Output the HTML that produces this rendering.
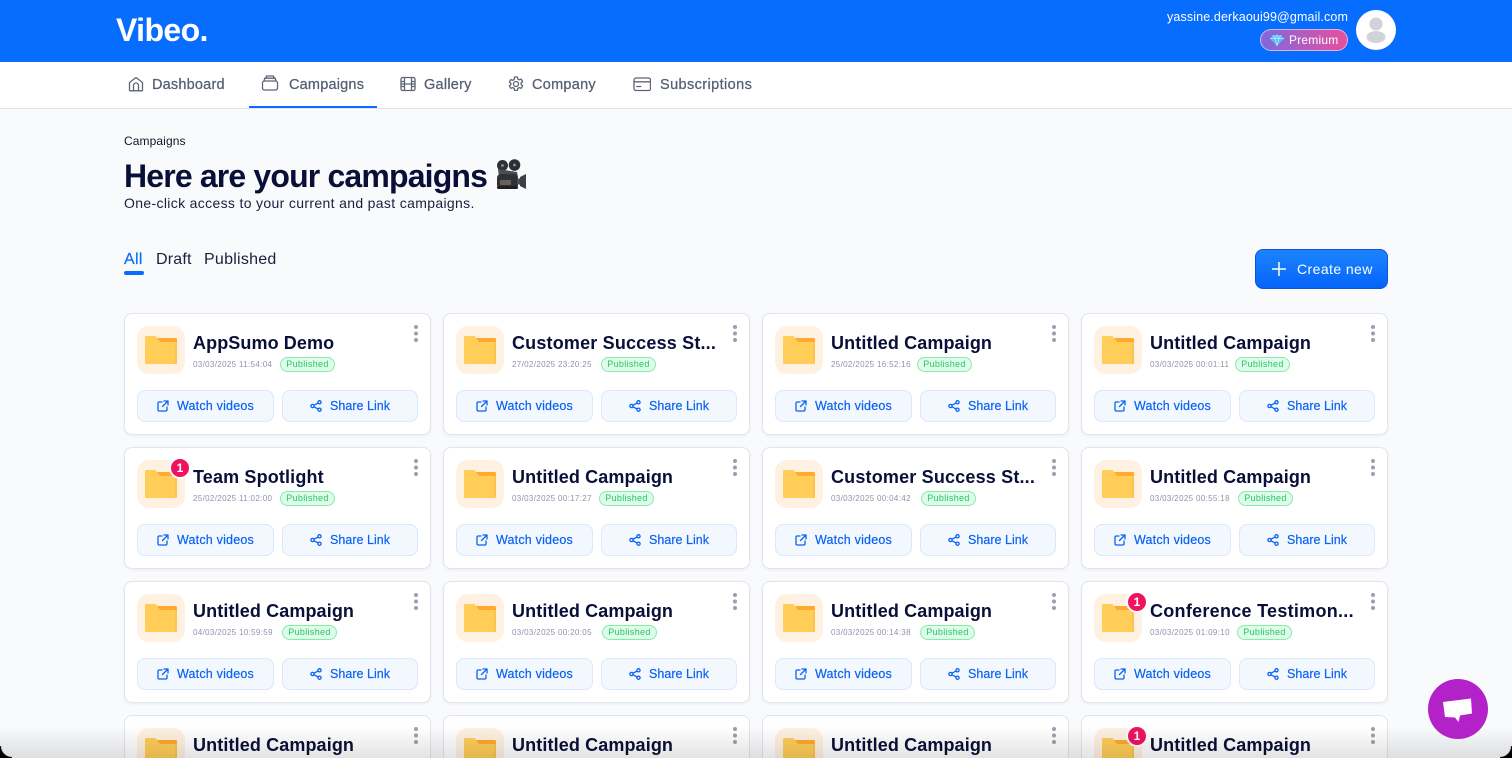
<!DOCTYPE html>
<html lang="en"><head><meta charset="utf-8"><title>Vibeo Campaigns</title>
<style>
*{box-sizing:border-box}
html,body{margin:0;padding:0;width:1512px;height:758px;overflow:hidden}
#w{position:absolute;left:0;top:0;width:1512px;height:758px;overflow:hidden;background:#f9fafc;font-family:"Liberation Sans",sans-serif;color:#0b1038}
.a{position:absolute;white-space:nowrap}
.hd{position:absolute;left:0;top:0;width:1512px;height:62px;background:#076dff}
.nv{position:absolute;left:0;top:62px;width:1512px;height:47px;background:#fff;border-bottom:1px solid #e4e6ee}
.nt{position:absolute;top:76px;font-size:14.5px;line-height:18px;color:#565e72;white-space:nowrap;-webkit-text-stroke:.25px #565e72}
.ni{position:absolute;top:75px;width:18px;height:18px;fill:none;stroke:#5d6477;stroke-width:1.3;stroke-linecap:round;stroke-linejoin:round}
.c{position:absolute;width:307px;height:122px;background:#fff;border:1px solid #e2e5ec;border-radius:8px;box-shadow:0 1px 3px rgba(20,30,60,.06)}
.c.l{height:43px;border-bottom:0;border-radius:8px 8px 0 0;box-shadow:none;overflow:hidden}
.l .f{height:31px;border-radius:12px 12px 0 0;overflow:hidden}
.f{position:absolute;left:12px;top:12px;width:48px;height:48px;background:#fff1e1;border-radius:12px}
.f svg{position:absolute;left:8px;top:9px;width:32px;height:30px}
.t{position:absolute;left:68px;top:19px;font-size:18px;line-height:20px;font-weight:700;color:#0a0f38;white-space:nowrap}
.u{letter-spacing:.12px}
.d{position:absolute;left:68px;top:46px;font-size:8px;line-height:10px;letter-spacing:.34px;color:#8d94a6;white-space:nowrap}
.p{position:absolute;top:43px;width:55px;height:15px;border:1px solid #86ecaa;background:#dffbe9;border-radius:8px;font-size:9px;line-height:13px;letter-spacing:.32px;color:#27c766;text-align:center;white-space:nowrap}
.b{position:absolute;top:76px;height:32px;background:#f3f8ff;border:1px solid #dbe7fb;border-radius:8px;font-size:12.5px;line-height:30px;color:#0a62f0;white-space:nowrap;-webkit-text-stroke:.2px #0a62f0}
.b1{left:12px;width:136.5px;padding-left:39px;letter-spacing:.2px}
.b2{left:156.5px;width:136.5px;padding-left:47.5px;letter-spacing:.03px}
.b svg{position:absolute;top:9px;width:12px;height:12px;fill:none;stroke:#0a62f0;stroke-width:1.3;stroke-linecap:round;stroke-linejoin:round}
.b1 svg{left:19px}.b2 svg{left:27.500px}
.m{position:absolute;left:289px;top:11px;width:4px;height:4px;background:#9aa0ae;border-radius:50%;box-shadow:0 6.5px 0 #9aa0ae,0 13px 0 #9aa0ae}
.n{position:absolute;left:44px;top:9px;width:22px;height:22px;background:#f0125f;border:2px solid #fff;border-radius:50%;color:#fff;font-size:12px;font-weight:700;line-height:18px;text-align:center}
</style></head><body><div id="w">
<svg width="0" height="0" style="position:absolute"><defs>
<symbol id="fo" viewBox="0 0 32 30"><path d="M12 3h18.500a1.500 1.500 0 0 1 1.500 1.500V10H12z" fill="#ffa92e"/><path d="M1.500 1H10.500L15 7H32V28A1.500 1.500 0 0 1 30.500 29H1.500A1.500 1.500 0 0 1 0 28V2.500A1.500 1.500 0 0 1 1.500 1Z" fill="#ffcd58"/><path d="M30 7h2V28A1.500 1.500 0 0 1 30.500 29H30z" fill="#ffc24c"/></symbol>
<symbol id="ex" viewBox="0 0 12 12"><path d="M5 2H2.200A1.200 1.200 0 0 0 1 3.200v6.600A1.200 1.200 0 0 0 2.200 11h6.600A1.200 1.200 0 0 0 10 9.800V7M7 1h4v4M11 1 5.500 6.500"/></symbol>
<symbol id="sh" viewBox="0 0 12 12"><circle cx="9.500" cy="2.300" r="1.600"/><circle cx="2.500" cy="6" r="1.600"/><circle cx="9.500" cy="9.700" r="1.600"/><path d="M4 5.200 8 3.100M4 6.800l4 2.100"/></symbol>
</defs></svg>

<div class="hd"></div>
<div class="a" style="left:116px;top:12px;font-size:32px;line-height:36px;font-weight:700;color:#fff;letter-spacing:-.6px">Vibeo.</div>
<div class="a" style="right:164px;top:10px;font-size:12.500px;line-height:14px;color:#fff;letter-spacing:.13px">yassine.derkaoui99@gmail.com</div>
<div class="a" style="left:1260px;top:29px;width:88px;height:22px;border-radius:11px;border:1px solid rgba(255,255,255,.55);background:linear-gradient(90deg,#7f68de,#e84f9c);color:#fff;font-size:12px;line-height:20px;padding-left:28px;letter-spacing:.2px">Premium</div>
<svg class="a" style="left:1270px;top:34px" width="14" height="12" viewBox="0 0 14 12"><path d="M3 1h8l3 3.500L7 12 0 4.500z" fill="#56bdf5"/><path d="M3 1 5 4.500 7 12 9 4.500 11 1M0 4.500h14M5 4.500 7 1l2 3.500" fill="none" stroke="#bfeaff" stroke-width=".7"/></svg>
<svg class="a" style="left:1356px;top:10px" width="40" height="40" viewBox="0 0 40 40"><circle cx="20" cy="20" r="20" fill="#fff"/><circle cx="20" cy="14" r="6.500" fill="#d1d3d8"/><ellipse cx="20" cy="27" rx="9.500" ry="6" fill="#d1d3d8"/></svg>

<div class="nv"></div>
<svg class="ni" style="left:127px" viewBox="0 0 18 18"><path d="M2.500 7.500 9 2.500l6.500 5V15a.8.8 0 0 1-.8.8H3.300a.8.8 0 0 1-.8-.8z"/><path d="M6.500 15.800V10.500a2.500 2.500 0 0 1 5 0v5.300"/></svg>
<div class="nt" style="left:152px;letter-spacing:.2px">Dashboard</div>
<svg class="ni" style="left:261px;top:74px" viewBox="0 0 18 18"><rect x="1.500" y="7" width="15" height="9" rx="2"/><path d="M3 7 3.800 4.200h10.400L15 7M5 4.200 5.500 2h7l.5 2.200"/></svg>
<div class="nt" style="left:289px;letter-spacing:.2px">Campaigns</div>
<svg class="ni" style="left:399px" viewBox="0 0 18 18"><rect x="2" y="2.500" width="14" height="13" rx="1.500"/><path d="M5.500 2.500v13M12.500 2.500v13M2 6.500h3.500M2 9h14M2 11.500h3.500M12.500 6.500H16M12.500 11.500H16"/></svg>
<div class="nt" style="left:424px;letter-spacing:.25px">Gallery</div>
<svg class="ni" style="left:507px" viewBox="0 0 18 18"><circle cx="9" cy="9" r="2.500"/><path d="M7.600 2h2.800l.4 2 1.500.8 1.900-.7 1.400 2.400-1.500 1.400v1.600l1.500 1.400-1.400 2.400-1.900-.7-1.500.8-.4 2H7.600l-.4-2-1.500-.8-1.900.7-1.400-2.400 1.500-1.400V8.400L2.400 7l1.400-2.400 1.900.7 1.500-.8z"/></svg>
<div class="nt" style="left:532px;letter-spacing:.27px">Company</div>
<svg class="ni" style="left:633px" viewBox="0 0 18 18"><rect x="1" y="3" width="16.500" height="12.500" rx="2"/><path d="M1 6.800h16.500M3.800 11.500h4"/></svg>
<div class="nt" style="left:660px;letter-spacing:.4px">Subscriptions</div>
<div class="a" style="left:249px;top:106px;width:128px;height:2px;background:#076dff"></div>

<div class="a" style="left:124px;top:134px;font-size:12px;line-height:14px;color:#12152a;letter-spacing:.1px">Campaigns</div>
<div class="a" style="left:124px;top:157px;font-size:32px;line-height:38px;font-weight:700;color:#0a0f38;letter-spacing:-.84px">Here are your campaigns</div>
<svg class="a" style="left:494px;top:159px" width="34" height="32" viewBox="0 0 34 32">
<circle cx="8.500" cy="6.500" r="5.500" fill="#2f3237"/><circle cx="20.500" cy="6" r="5.800" fill="#2b2e33"/><circle cx="8.500" cy="6.500" r="1.400" fill="#8b9096"/><circle cx="20.500" cy="6" r="1.400" fill="#8b9096"/>
<path d="M4 10l19 3 1 5H5z" fill="#4a4d53"/><rect x="3" y="15" width="21" height="15" rx="4" fill="#2f3237"/><rect x="6" y="21" width="11" height="5" rx="1" fill="#6a6158"/><path d="M23 20l4-1v7l-4-1z" fill="#4a4d53"/><path d="M26 18l6-3v15l-6-3z" fill="#3c3f45"/><rect x="3" y="27" width="21" height="3" rx="1.500" fill="#1e2024"/>
</svg>
<div class="a" style="left:124px;top:195px;font-size:14px;line-height:16px;color:#1a1f3d;letter-spacing:.34px">One-click access to your current and past campaigns.</div>
<div class="a" style="left:124px;top:251px;font-size:16px;line-height:18px;color:#076dff;letter-spacing:.3px;-webkit-text-stroke:.2px #076dff">All</div>
<div class="a" style="left:156px;top:251px;font-size:16px;line-height:18px;color:#1a1f3d;letter-spacing:.2px">Draft</div>
<div class="a" style="left:204px;top:251px;font-size:16px;line-height:18px;color:#1a1f3d;letter-spacing:.25px">Published</div>
<div class="a" style="left:124px;top:271px;width:20px;height:4px;border-radius:2px;background:#076dff"></div>
<div class="a" style="left:1255px;top:249px;width:133px;height:40px;border-radius:8px;background:linear-gradient(180deg,#1c84ff,#0564fa);border:1px solid #0d55d2;color:#fff;font-size:14px;line-height:38px;padding-left:41px;letter-spacing:.42px">Create new</div>
<svg class="a" style="left:1272px;top:262px" width="14" height="14" viewBox="0 0 14 14"><path d="M7 0v14M0 7h14" stroke="#fff" stroke-width="1.500"/></svg>

<!-- row 1 -->
<div class="c" style="left:124px;top:313px"><div class="f"><svg><use href="#fo"/></svg></div><div class="t" style="letter-spacing:.1px">AppSumo Demo</div><div class="d">03/03/2025 11:54:04</div><div class="p" style="left:155px">Published</div><div class="m"></div><div class="b b1"><svg><use href="#ex"/></svg>Watch videos</div><div class="b b2"><svg><use href="#sh"/></svg>Share Link</div></div>
<div class="c" style="left:443px;top:313px"><div class="f"><svg><use href="#fo"/></svg></div><div class="t" style="letter-spacing:.18px">Customer Success St...</div><div class="d">27/02/2025 23:20:25</div><div class="p" style="left:157px">Published</div><div class="m"></div><div class="b b1"><svg><use href="#ex"/></svg>Watch videos</div><div class="b b2"><svg><use href="#sh"/></svg>Share Link</div></div>
<div class="c" style="left:762px;top:313px"><div class="f"><svg><use href="#fo"/></svg></div><div class="t u">Untitled Campaign</div><div class="d">25/02/2025 16:52:16</div><div class="p" style="left:154px">Published</div><div class="m"></div><div class="b b1"><svg><use href="#ex"/></svg>Watch videos</div><div class="b b2"><svg><use href="#sh"/></svg>Share Link</div></div>
<div class="c" style="left:1081px;top:313px"><div class="f"><svg><use href="#fo"/></svg></div><div class="t u">Untitled Campaign</div><div class="d">03/03/2025 00:01:11</div><div class="p" style="left:153px">Published</div><div class="m"></div><div class="b b1"><svg><use href="#ex"/></svg>Watch videos</div><div class="b b2"><svg><use href="#sh"/></svg>Share Link</div></div>
<!-- row 2 -->
<div class="c" style="left:124px;top:447px"><div class="f"><svg><use href="#fo"/></svg></div><div class="n">1</div><div class="t" style="letter-spacing:.15px">Team Spotlight</div><div class="d">25/02/2025 11:02:00</div><div class="p" style="left:155px">Published</div><div class="m"></div><div class="b b1"><svg><use href="#ex"/></svg>Watch videos</div><div class="b b2"><svg><use href="#sh"/></svg>Share Link</div></div>
<div class="c" style="left:443px;top:447px"><div class="f"><svg><use href="#fo"/></svg></div><div class="t u">Untitled Campaign</div><div class="d">03/03/2025 00:17:27</div><div class="p" style="left:155px">Published</div><div class="m"></div><div class="b b1"><svg><use href="#ex"/></svg>Watch videos</div><div class="b b2"><svg><use href="#sh"/></svg>Share Link</div></div>
<div class="c" style="left:762px;top:447px"><div class="f"><svg><use href="#fo"/></svg></div><div class="t" style="letter-spacing:.18px">Customer Success St...</div><div class="d">03/03/2025 00:04:42</div><div class="p" style="left:158px">Published</div><div class="m"></div><div class="b b1"><svg><use href="#ex"/></svg>Watch videos</div><div class="b b2"><svg><use href="#sh"/></svg>Share Link</div></div>
<div class="c" style="left:1081px;top:447px"><div class="f"><svg><use href="#fo"/></svg></div><div class="t u">Untitled Campaign</div><div class="d">03/03/2025 00:55:18</div><div class="p" style="left:156px">Published</div><div class="m"></div><div class="b b1"><svg><use href="#ex"/></svg>Watch videos</div><div class="b b2"><svg><use href="#sh"/></svg>Share Link</div></div>
<!-- row 3 -->
<div class="c" style="left:124px;top:581px"><div class="f"><svg><use href="#fo"/></svg></div><div class="t u">Untitled Campaign</div><div class="d">04/03/2025 10:59:59</div><div class="p" style="left:157px">Published</div><div class="m"></div><div class="b b1"><svg><use href="#ex"/></svg>Watch videos</div><div class="b b2"><svg><use href="#sh"/></svg>Share Link</div></div>
<div class="c" style="left:443px;top:581px"><div class="f"><svg><use href="#fo"/></svg></div><div class="t u">Untitled Campaign</div><div class="d">03/03/2025 00:20:05</div><div class="p" style="left:158px">Published</div><div class="m"></div><div class="b b1"><svg><use href="#ex"/></svg>Watch videos</div><div class="b b2"><svg><use href="#sh"/></svg>Share Link</div></div>
<div class="c" style="left:762px;top:581px"><div class="f"><svg><use href="#fo"/></svg></div><div class="t u">Untitled Campaign</div><div class="d">03/03/2025 00:14:38</div><div class="p" style="left:157px">Published</div><div class="m"></div><div class="b b1"><svg><use href="#ex"/></svg>Watch videos</div><div class="b b2"><svg><use href="#sh"/></svg>Share Link</div></div>
<div class="c" style="left:1081px;top:581px"><div class="f"><svg><use href="#fo"/></svg></div><div class="n">1</div><div class="t" style="letter-spacing:.28px">Conference Testimon...</div><div class="d">03/03/2025 01:09:10</div><div class="p" style="left:155px">Published</div><div class="m"></div><div class="b b1"><svg><use href="#ex"/></svg>Watch videos</div><div class="b b2"><svg><use href="#sh"/></svg>Share Link</div></div>
<!-- row 4 -->
<div class="c l" style="left:124px;top:715px"><div class="f"><svg><use href="#fo"/></svg></div><div class="t u">Untitled Campaign</div><div class="m"></div></div>
<div class="c l" style="left:443px;top:715px"><div class="f"><svg><use href="#fo"/></svg></div><div class="t u">Untitled Campaign</div><div class="m"></div></div>
<div class="c l" style="left:762px;top:715px"><div class="f"><svg><use href="#fo"/></svg></div><div class="t u">Untitled Campaign</div><div class="m"></div></div>
<div class="c l" style="left:1081px;top:715px"><div class="f"><svg><use href="#fo"/></svg></div><div class="n">1</div><div class="t u">Untitled Campaign</div><div class="m"></div></div>

<div class="a" style="left:0;top:726px;width:1512px;height:32px;background:linear-gradient(180deg,rgba(0,0,0,0),rgba(0,0,0,.11));pointer-events:none"></div>
<div class="a" style="left:1428px;top:679px;width:60px;height:60px;border-radius:50%;background:#b322c9"></div>
<svg class="a" style="left:1428px;top:679px" width="60" height="60" viewBox="0 0 60 60"><path d="M15 23 43 19.500 44 34.500 32 36.500 30.500 43 27 38.500 17 38z" fill="#fff"/></svg>
<div class="a" style="left:0;top:746px;width:12px;height:12px;background:radial-gradient(circle at 100% 0,transparent 10.500px,#000 11.500px)"></div>
<div class="a" style="left:1500px;top:746px;width:12px;height:12px;background:radial-gradient(circle at 0 0,transparent 10.500px,#000 11.500px)"></div>
</div></body></html>
